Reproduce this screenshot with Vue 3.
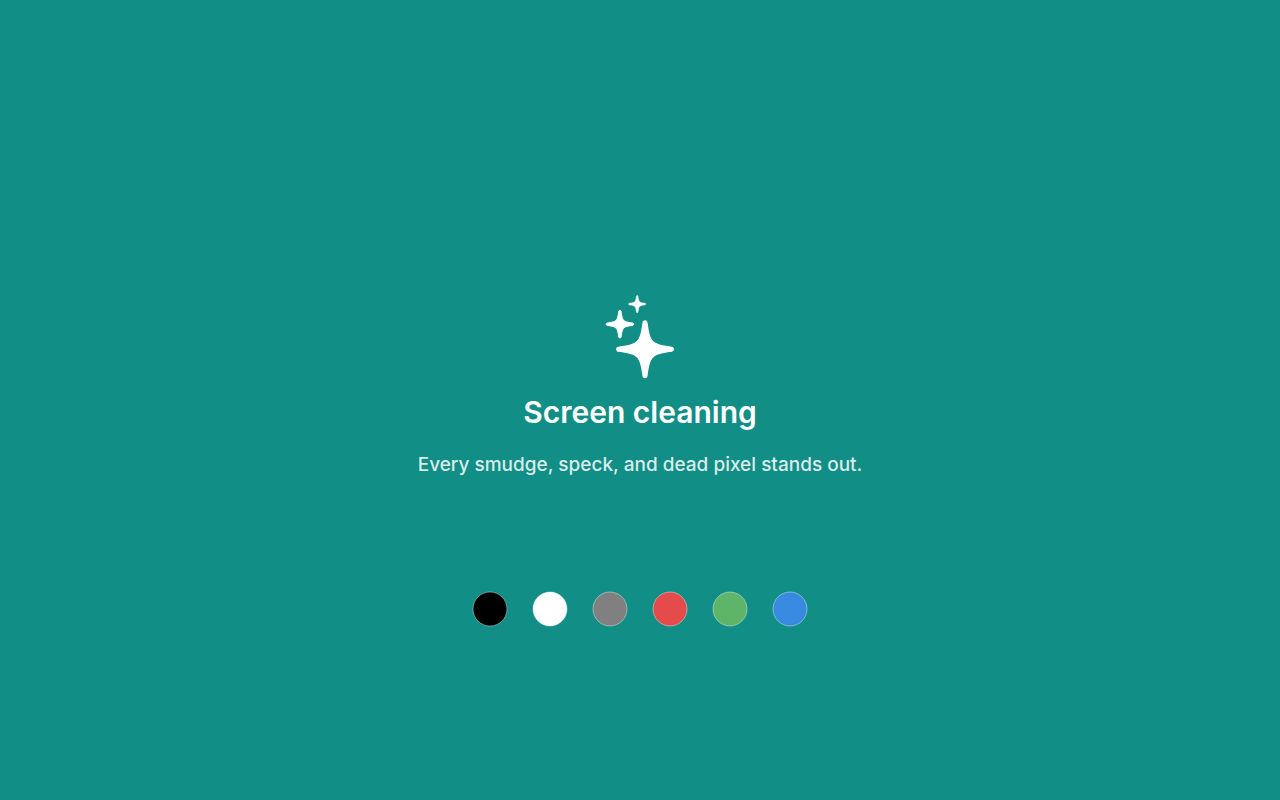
<script setup>
import { ref } from 'vue'

const background = ref('#118e85')
const swatches = [
  { name: 'Black', color: '#000000' },
  { name: 'White', color: '#ffffff' },
  { name: 'Gray', color: '#808080' },
  { name: 'Red', color: '#e54b4b' },
  { name: 'Green', color: '#5eb468' },
  { name: 'Blue', color: '#388ae0' },
]
</script>

<template>
  <main class="screen" :style="{ backgroundColor: background }">
    <svg class="sparkles" viewBox="0 0 70 86" aria-hidden="true">
      <defs>
        <path
          id="spark"
          d="M-2.5-26.8C-2.1-29.7 2.1-29.7 2.5-26.8C4.2-15 5.4-11 8.2-8.2S15-4.2 26.8-2.5C29.7-2.1 29.7 2.1 26.8 2.5C15 4.2 11 5.4 8.2 8.2S4.2 15 2.5 26.8C2.1 29.7-2.1 29.7-2.5 26.8C-4.2 15-5.4 11-8.2 8.2S-15 4.2-26.8 2.5C-29.7 2.1-29.7-2.1-26.8-2.5C-15-4.2-11-5.4-8.2-8.2S-4.2-15-2.5-26.8Z"
        />
      </defs>
      <use href="#spark" transform="translate(40 55.3)" />
      <use class="small" href="#spark" transform="translate(14.9 30.2) scale(.475)" />
      <use class="small" href="#spark" transform="translate(32.2 10.1) scale(.295)" />
    </svg>
    <h1>Screen cleaning</h1>
    <p>Every smudge, speck, and dead pixel stands out.</p>
    <div class="swatches" role="group" aria-label="Background color">
      <button
        v-for="s in swatches"
        :key="s.name"
        type="button"
        :aria-label="s.name"
        @click="background = s.color"
      >
        <svg viewBox="0 0 36 36" aria-hidden="true">
          <circle cx="18" cy="18" r="17" :fill="s.color" />
        </svg>
      </button>
    </div>
  </main>
</template>

<style>
body {
  margin: 0;
}
</style>

<style scoped>
.screen {
  box-sizing: border-box;
  min-height: 100vh;
  padding: 120px 24px 0;
  display: flex;
  flex-direction: column;
  align-items: center;
  justify-content: center;
  color: #fff;
  font-family: Inter, "Liberation Sans", sans-serif;
  text-align: center;
}

.sparkles {
  width: 70px;
  height: 86px;
  fill: currentColor;
}

.small {
  stroke: currentColor;
  stroke-width: 2;
}

h1 {
  margin: 12px 0 0;
  font-size: 30px;
  line-height: 40px;
  font-weight: 600;
}

p {
  margin: 20px 0 0;
  font-size: 19px;
  line-height: 26px;
  font-weight: 500;
  color: rgba(255, 255, 255, 0.85);
}

.swatches {
  display: flex;
  flex-wrap: wrap;
  justify-content: center;
  gap: 24px;
  margin-top: 113px;
}

button {
  width: 36px;
  height: 36px;
  padding: 0;
  border: 0;
  border-radius: 50%;
  background: none;
  cursor: pointer;
}

button svg {
  display: block;
  width: 36px;
  height: 36px;
}

circle {
  stroke: rgba(255, 255, 255, 0.4);
  stroke-width: 1;
}
</style>
